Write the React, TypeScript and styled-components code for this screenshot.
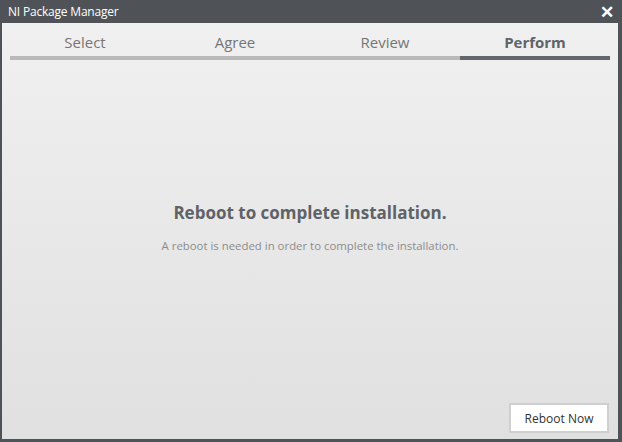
import React from "react";
import styled, { createGlobalStyle } from "styled-components";

const Global = createGlobalStyle`
  html, body { margin: 0; padding: 0; }
  body { width: 622px; height: 442px; overflow: hidden; background: #4f5358; }
  * { box-sizing: border-box; }
`;

const Window = styled.div`
  width: 622px;
  height: 442px;
  display: flex;
  flex-direction: column;
  background: #4f5358;
  padding: 0 4px 3px 2px;
  font-family: "Open Sans", "Noto Sans", sans-serif;
`;

const TitleBar = styled.div`
  height: 23px;
  display: flex;
  align-items: center;
  justify-content: space-between;
  padding: 0 6px 0 6px;
  color: #ffffff;
`;

const Title = styled.span`
  font-size: 12px;
  letter-spacing: -0.2px;
`;

const Close = styled.span`
  font-size: 17px;
  font-weight: 700;
  line-height: 1;
  margin-right: -2px;
`;

const Body = styled.div`
  flex: 1;
  display: flex;
  flex-direction: column;
  background: linear-gradient(#f0f0f0, #e0e0e0);
  padding: 0 8px 6px 8px;
`;

const Steps = styled.div`
  display: grid;
  grid-template-columns: repeat(4, 1fr);
`;

const Step = styled.div`
  display: flex;
  flex-direction: column;
  align-items: center;
`;

const StepLabel = styled.span<{ $active?: boolean }>`
  height: 33px;
  line-height: 38px;
  font-size: 15px;
  color: ${(p) => (p.$active ? "#606468" : "#767676")};
  font-weight: ${(p) => (p.$active ? 700 : 400)};
`;

const StepBar = styled.div<{ $active?: boolean }>`
  align-self: stretch;
  height: 4px;
  background: ${(p) => (p.$active ? "#63676b" : "#b9b9b9")};
`;

const Center = styled.div`
  flex: 1;
  display: flex;
  flex-direction: column;
  align-items: center;
  justify-content: center;
  padding-bottom: 10px;
`;

const Heading = styled.h1`
  margin: 0;
  font-size: 17px;
  font-weight: 700;
  color: #5f6266;
`;

const Sub = styled.p`
  margin: 14px 0 0 0;
  font-size: 11.4px;
  color: #8c8c8c;
`;

const Footer = styled.div`
  display: flex;
  justify-content: flex-end;
`;

const Button = styled.button`
  width: 100px;
  height: 30px;
  margin-right: 1px;
  background: #ffffff;
  border: 2px solid #cfcfcf;
  font-family: inherit;
  font-size: 12px;
  color: #333;
  padding: 0;
`;

const steps = ["Select", "Agree", "Review", "Perform"];

export default function App() {
  return (
    <>
      <Global />
      <Window>
        <TitleBar>
          <Title>NI Package Manager</Title>
          <Close>✕</Close>
        </TitleBar>
        <Body>
          <Steps>
            {steps.map((s, i) => (
              <Step key={s}>
                <StepLabel $active={i === 3}>{s}</StepLabel>
                <StepBar $active={i === 3} />
              </Step>
            ))}
          </Steps>
          <Center>
            <Heading>Reboot to complete installation.</Heading>
            <Sub>A reboot is needed in order to complete the installation.</Sub>
          </Center>
          <Footer>
            <Button>Reboot Now</Button>
          </Footer>
        </Body>
      </Window>
    </>
  );
}
